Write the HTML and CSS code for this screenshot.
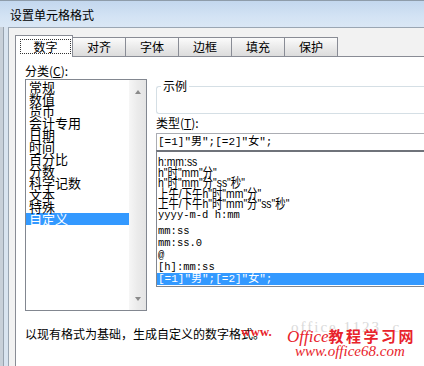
FILE: index.html
```html
<!DOCTYPE html>
<html lang="zh-CN">
<head>
    <meta charset="UTF-8">
    <title>设置单元格格式</title>
    <link rel="stylesheet" href="styles.css">
</head>
<body>
    <div class="window">
        <div class="titlebar">设置单元格格式</div>
        <div class="frame">
            <div class="client">
                <div class="tabs">
                    <div class="tab active"><span class="focus">数字</span></div>
                    <div class="tab">对齐</div>
                    <div class="tab">字体</div>
                    <div class="tab">边框</div>
                    <div class="tab">填充</div>
                    <div class="tab">保护</div>
                </div>

                <div class="panel">
                    <div class="columns">
                        <div class="col-left">
                            <div class="label">分类(<u>C</u>):</div>
                            <div class="listbox category">
                                <div class="items">
                                    <div class="item">常规</div>
                                    <div class="item">数值</div>
                                    <div class="item">货币</div>
                                    <div class="item">会计专用</div>
                                    <div class="item">日期</div>
                                    <div class="item">时间</div>
                                    <div class="item">百分比</div>
                                    <div class="item">分数</div>
                                    <div class="item">科学记数</div>
                                    <div class="item">文本</div>
                                    <div class="item">特殊</div>
                                    <div class="item selected">自定义</div>
                                </div>
                                <div class="scrollbar">
                                    <span class="arrow up"></span>
                                    <span class="arrow down"></span>
                                </div>
                            </div>
                        </div>

                        <div class="col-right">
                            <div class="sample">
                                <span class="sample-label">示例</span>
                            </div>
                            <div class="label type-label">类型(<u>T</u>):</div>
                            <div class="input">[=1]"男";[=2]"女";</div>
                            <div class="listbox types">
                                <div class="row"><span class="cond">h:mm:ss</span></div>
                                <div class="row"><span class="cond">h"时"mm"分"</span></div>
                                <div class="row"><span class="cond">h"时"mm"分"ss"秒"</span></div>
                                <div class="row"><span class="cond">上午/下午h"时"mm"分"</span></div>
                                <div class="row"><span class="cond">上午/下午h"时"mm"分"ss"秒"</span></div>
                                <div class="row">yyyy-m-d h:mm</div>
                                <div class="row tall first-tall">mm:ss</div>
                                <div class="row tall">mm:ss.0</div>
                                <div class="row tall">@</div>
                                <div class="row tall">[h]:mm:ss</div>
                                <div class="row tall selected">[=1]"男";[=2]"女";</div>
                            </div>
                        </div>
                    </div>

                    <p class="hint">以现有格式为基础，生成自定义的数字格式。</p>
                </div>
            </div>
        </div>
    </div>

    <div class="watermark">
        <span class="wm-ghost">office 1123 .c</span>
        <span class="wm-www">www.</span>
        <span class="wm-title"><i>Office</i><b>教程学习网</b></span>
        <span class="wm-url">www.office68.com</span>
    </div>
</body>
</html>
```

FILE: styles.css
```css
* {
    margin: 0;
    padding: 0;
    box-sizing: border-box;
}

body {
    width: 424px;
    height: 366px;
    overflow: hidden;
    position: relative;
    font-family: "Noto Sans CJK SC", "Liberation Sans", sans-serif;
    font-size: 12px;
    color: #000;
    background: #dbe6f2;
}

.window {
    display: flex;
    flex-direction: column;
    height: 366px;
    overflow: hidden;
}

.titlebar {
    height: 27px;
    line-height: 27px;
    padding-left: 10px;
    font-size: 12px;
    background: linear-gradient(to bottom, #c3d7ee, #d3e3f4 60%, #dae7f5);
    border-top: 1px solid #8e9caa;
}

.frame {
    flex: 1;
    display: flex;
    padding-left: 8px;
    overflow: hidden;
    background: linear-gradient(to right, #c8d0d9 0 3px, #98a3af 3px 4px, #d9e4f0 4px);
}

.client {
    flex: 1;
    background: #f2f2f2;
    border-top: 1px solid #9aa6b3;
    border-left: 1px solid #9aa6b3;
    padding: 7px 0 0 6px;
    overflow: hidden;
}

/* tabs */

.tabs {
    display: flex;
    align-items: flex-end;
    height: 21px;
}

.tab {
    width: 54px;
    height: 19px;
    margin-left: -1px;
    line-height: 18px;
    text-align: center;
    border: 1px solid #898c95;
    border-bottom: none;
    background: linear-gradient(to bottom, #fbfbfb, #e9e9e9 55%, #dcdcdc);
}

.tab.active {
    width: 58px;
    height: 22px;
    margin-left: 0;
    margin-bottom: -1px;
    position: relative;
    z-index: 1;
    background: #fff;
    text-align: left;
}

.focus {
    display: block;
    margin: 3px 1px 0 4px;
    height: 15px;
    line-height: 13px;
    text-align: center;
    border: 1px dotted #333;
}

.panel {
    width: 420px;
    height: 310px;
    background: #fff;
    border: 1px solid #898c95;
    border-right: none;
    border-bottom: none;
    padding: 6px 0 0 9px;
    overflow: hidden;
}

.columns {
    display: flex;
    gap: 9px;
}

.label {
    height: 16px;
    line-height: 16px;
}

.label u {
    text-decoration: underline;
}

/* category list */

.col-left {
    width: 122px;
    flex: none;
}

.listbox {
    border: 1px solid #828790;
    background: #fff;
}

.category {
    height: 232px;
    display: flex;
}

.items {
    flex: 1;
    padding-top: 1px;
}

.item {
    height: 12px;
    line-height: 12px;
    font-size: 13px;
    padding-left: 3px;
    white-space: nowrap;
}

.item.selected {
    background: #3399ff;
    color: #fff;
}

.scrollbar {
    width: 17px;
    display: flex;
    flex-direction: column;
    justify-content: space-between;
    align-items: center;
    padding: 10px 0 9px;
    background: linear-gradient(to right, #f6f6f6, #ebebeb 50%, #e4e4e4);
}

.arrow {
    width: 0;
    height: 0;
    border-left: 3.5px solid transparent;
    border-right: 3.5px solid transparent;
}

.arrow.up {
    border-bottom: 4px solid #8a8a8a;
}

.arrow.down {
    border-top: 4px solid #8a8a8a;
}

/* right column */

.col-right {
    flex: 1;
    min-width: 0;
}

.sample {
    margin-top: 23px;
    height: 28px;
    border: 1px solid #d5dfe5;
    border-right: none;
    border-radius: 3px 0 0 3px;
}

.sample-label {
    display: inline-block;
    margin: -9px 0 0 4px;
    padding: 0 2px;
    height: 16px;
    line-height: 16px;
    background: #fff;
    vertical-align: top;
}

.type-label {
    margin-top: 1px;
}

.input {
    margin-top: 2px;
    height: 17px;
    line-height: 16px;
    padding-left: 1px;
    border: 1px solid #abadb3;
    border-bottom: none;
    border-right: none;
    font-family: "Liberation Mono", "Noto Sans CJK SC", monospace;
    font-size: 11px;
    white-space: nowrap;
}

.types {
    height: 137px;
    border-top: 2px solid #6f737a;
    border-right: none;
    padding-top: 5px;
    font-family: "Liberation Mono", "Noto Sans CJK SC", monospace;
    font-size: 10.5px;
}

.row {
    height: 10.5px;
    line-height: 10.5px;
    padding-left: 1px;
    white-space: nowrap;
}

/* the short format strings are drawn narrow in the dialog */
.cond {
    display: inline-block;
    font-family: "Liberation Sans", "Noto Sans CJK SC", sans-serif;
    font-size: 13px;
    transform: scaleX(0.8);
    transform-origin: left center;
}

.row.tall {
    height: 12px;
    line-height: 12px;
}

.row.first-tall {
    margin-top: 5px;
}

.row.selected {
    background: #3399ff;
    color: #fff;
    font-size: 11px;
}

.hint {
    margin-top: 15px;
    line-height: 16px;
    white-space: nowrap;
}

/* watermark over the bottom right corner */

.watermark {
    color: #e8232b;
}

.wm-ghost {
    position: absolute;
    left: 291px;
    top: 319px;
    font-family: "Liberation Serif", serif;
    font-size: 15px;
    letter-spacing: 2px;
    color: #dadada;
}

.wm-www {
    position: absolute;
    left: 241px;
    top: 324px;
    font-family: "Liberation Serif", serif;
    font-weight: bold;
    font-size: 13px;
}

.wm-title {
    position: absolute;
    left: 287px;
    top: 326px;
    white-space: nowrap;
    line-height: 20px;
}

.wm-title i {
    font-family: "Liberation Serif", serif;
    font-size: 17px;
}

.wm-title b {
    font-size: 15px;
    letter-spacing: 2.5px;
}

.wm-url {
    position: absolute;
    left: 295px;
    top: 343px;
    font-family: "Liberation Serif", serif;
    font-style: italic;
    font-size: 15px;
}
```
